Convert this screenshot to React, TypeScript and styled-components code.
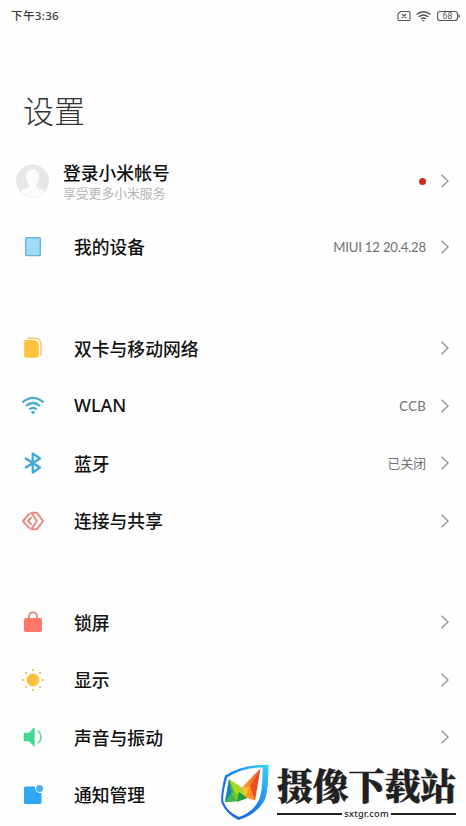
import React from 'react';
import styled, { createGlobalStyle } from 'styled-components';

const GlobalStyle = createGlobalStyle`
  * { box-sizing: border-box; }
  html, body { margin: 0; background: #fefefe; }
  body { overflow: hidden; font-family: "Noto Sans CJK SC", sans-serif; }
  svg { display: block; }
`;

const Screen = styled.main`
  position: relative;
  width: 466px;
  height: 826px;
  overflow: hidden;
  background: #fefefe;
  color: #111;
`;

const StatusBar = styled.header`
  height: 32px;
  padding: 0 4px 0 11px;
  display: flex;
  align-items: center;
  justify-content: space-between;
`;

const Time = styled.span`
  font-family: "Noto Sans", "Noto Sans CJK SC", sans-serif;
  font-size: 11.6px;
  line-height: 32px;
  font-weight: 500;
  letter-spacing: 0.3px;
  color: #3c3c3c;
`;

const Title = styled.h1`
  margin: 56px 0 0 23px;
  height: 44px;
  font-size: 31px;
  line-height: 43px;
  font-weight: 300;
  color: #333;
`;

const Account = styled.section`
  margin-top: 19px;
  height: 60px;
  padding: 0 16px 0 15px;
  display: flex;
  align-items: center;
`;

const AccountText = styled.div`
  flex: 1;
  margin-left: 14px;
`;

const AccountName = styled.div`
  font-size: 17.8px;
  line-height: 22px;
  font-weight: 500;
`;

const AccountHint = styled.div`
  font-size: 12.8px;
  line-height: 19px;
  color: #b5b5b5;
`;

const Dot = styled.i`
  width: 7px;
  height: 7px;
  margin-right: 14px;
  border-radius: 50%;
  background: #ca2d20;
`;

const Group = styled.section<{ $top: number }>`
  margin-top: ${(p) => p.$top}px;
`;

const Row = styled.div`
  height: 57.5px;
  padding: 0 16px 0 21px;
  display: flex;
  align-items: center;
`;

const IconSlot = styled.span`
  width: 24px;
  margin-right: 29px;
`;

const Label = styled.span<{ $latin: boolean }>`
  flex: 1;
  font-family: ${(p) => (p.$latin ? '"Noto Sans", sans-serif' : '"Noto Sans CJK SC", sans-serif')};
  font-size: ${(p) => (p.$latin ? 18 : 17.8)}px;
  line-height: 25px;
  font-weight: 500;
`;

const Value = styled.span<{ $latin?: boolean; $spacing: number }>`
  margin-right: 14px;
  font-family: ${(p) => (p.$latin ? 'Lato, sans-serif' : '"Noto Sans CJK SC", sans-serif')};
  font-size: ${(p) => (p.$latin ? 13.2 : 12.8)}px;
  line-height: 20px;
  letter-spacing: ${(p) => p.$spacing}px;
  color: #707070;
`;

const Divider = styled.hr`
  height: 1px;
  margin: 22px 16px 0 21px;
  border: 0;
  background: #f9f9f9;
`;

const Watermark = styled.aside`
  position: absolute;
  left: 219px;
  top: 762px;
  width: 240px;
  height: 62px;
  display: flex;
`;

const WatermarkText = styled.div`
  width: 179px;
  margin-left: 7px;
`;

const WatermarkName = styled.div`
  height: 46px;
  font-family: "Noto Serif CJK SC", "Noto Sans CJK SC", serif;
  font-size: 35.8px;
  line-height: 45px;
  font-weight: 900;
  color: #202020;
  -webkit-text-stroke: 0.5px #202020;
  white-space: nowrap;
`;

const SiteLine = styled.div`
  display: flex;
  align-items: center;
  gap: 2px;
  height: 12px;
  color: #222;
  font: 500 9.2px/12px "Noto Sans", sans-serif;
  letter-spacing: 0.25px;
  &::before, &::after {
    content: "";
    flex: 1;
    height: 2px;
    background: #222;
  }
`;

const StatusIcons = () => (
  <svg width="66" height="16" viewBox="0 0 66 16" fill="none" stroke="#555" strokeWidth="1.1">
    <path d="M4.5 3.500H13q1 0 1 1v7q0 1-1 1H3q-1 0-1-1V6zM6.200 6l4 4m0-4-4 4" />
    <path d="M20.500 6.500q7-5.500 14 0M22.700 8.800q4.800-3.700 9.600 0M25 11q2.500-1.800 5 0" strokeWidth="1.500" />
    <path d="m26 12 1.500 1.600 1.500-1.600z" fill="#555" stroke="none" />
    <rect x="41.500" y="3.500" width="20" height="9" rx="2.600" />
    <path d="M63.200 6.500v3" strokeWidth="1.400" />
    <text x="51.500" y="11.200" textAnchor="middle" fill="#555" stroke="none" fontFamily="Roboto, sans-serif" fontSize="8.800">68</text>
  </svg>
);

const Avatar = () => (
  <svg width="34" height="34" viewBox="0 0 34 34">
    <defs><clipPath id="avatar"><circle cx="17.500" cy="17" r="15.800" /></clipPath></defs>
    <circle cx="17.500" cy="17" r="16.200" fill="#e7e7e7" stroke="#e1e1e1" strokeWidth=".5" />
    <g clipPath="url(#avatar)" fill="#fbfbfb">
      <ellipse cx="17.500" cy="13" rx="6.700" ry="8" />
      <path d="M14 18h7v4.500q1 2 5 2.800 3 .7 4 3L27.500 34h-20L5 28.300q1-2.300 4-3 4-.8 5-2.800z" />
    </g>
  </svg>
);

const Chevron = () => (
  <svg width="10" height="16" viewBox="0 0 10 16" fill="none" stroke="#929292" strokeWidth="1.350">
    <path d="m1.500 1.800 6.500 6.200-6.500 6.200" />
  </svg>
);

const icons: Record<string, React.ReactNode> = {
  device: <rect x="4.700" y="2.700" width="14.600" height="18" rx="1" fill="#9edcf8" stroke="#5db4df" strokeWidth="1.300" />,
  sim: (
    <>
      <path d="M6.500 2.200h7.500q6 .5 6 6.200v11" fill="none" stroke="#efc877" strokeWidth="1.500" />
      <path d="M5 3.900h8q4.800 1 4.800 6V20q0 1.800-1.800 1.800H5Q3.200 21.800 3.200 20V5.700Q3.200 3.900 5 3.900z" fill="#fcc33b" />
    </>
  ),
  wlan: (
    <g fill="none" stroke="#44a9d5" strokeWidth="2.200">
      <path d="M1.500 8.400q10.500-9 21 0M4.900 12q7.100-6 14.200 0M8.300 15.400q3.700-3 7.400 0" />
      <path d="m9.700 17.700 2.300 2.700 2.300-2.700q-2.300-1.600-4.600 0z" fill="#3baee2" stroke="none" />
    </g>
  ),
  bluetooth: <path d="m4 7 15 9.500-7.300 5V2.500l7.300 5L4 17" fill="none" stroke="#3ba7da" strokeWidth="2.200" strokeLinejoin="round" />,
  share: (
    <g fill="none" stroke="#e48b80" strokeWidth="2" strokeLinejoin="round">
      <path d="M8.800 4.300 2 12l6.800 7.700M10.500 8.200 7 12l3.500 3.800" />
      <path d="M10.300 3.800H16l6 8.200-6 8.200h-5.700l5.500-8.200z" />
    </g>
  ),
  lock: (
    <>
      <path d="M8 9V6.300a4 4 0 0 1 8 0V9" fill="none" stroke="#d88a7d" strokeWidth="1.800" />
      <rect x="3" y="8" width="18" height="14" rx="1.800" fill="#ff7768" />
    </>
  ),
  display: (
    <g fill="#fbc13e">
      <circle cx="12" cy="12" r="6.500" />
      {[0, 45, 90, 135, 180, 225, 270, 315].map((angle) => (
        <circle key={angle} cx="12" cy="2" r="1.100" fill="#e8b755" transform={`rotate(${angle} 12 12)`} />
      ))}
    </g>
  ),
  sound: (
    <>
      <path d="M3.500 7.700H8l4.700-5Q13.700 2 13.700 3.300v17.400q0 1.300-1 .6l-4.700-5H3.500q-.8 0-.8-.8v-7q0-.8.800-.8z" fill="#3fd990" />
      <path d="M16.800 5.500q6.500 6.500 0 13" fill="none" stroke="#7ad4a7" strokeWidth="1.700" />
    </>
  ),
  notice: (
    <>
      <path d="M4.500 3.500h9.700a5 5 0 0 0 6.300 6.200v9.800q0 1.500-1.500 1.500H4.500Q3 21 3 19.500V5Q3 3.500 4.500 3.500z" fill="#2fa7f6" />
      <circle cx="18.600" cy="5.500" r="3.500" fill="#4ab0ea" />
    </>
  ),
};

type Item = { icon: string; label: string; value?: string; latin?: boolean; spacing?: number; plain?: boolean };

const SettingRow = ({ icon, label, value, latin, spacing = 0, plain }: Item) => (
  <Row>
    <IconSlot><svg width="24" height="24" viewBox="0 0 24 24">{icons[icon]}</svg></IconSlot>
    <Label $latin={label === 'WLAN'}>{label}</Label>
    {value && <Value $latin={latin} $spacing={spacing}>{value}</Value>}
    {!plain && <Chevron />}
  </Row>
);

const network: Item[] = [
  { icon: 'sim', label: '双卡与移动网络' },
  { icon: 'wlan', label: 'WLAN', value: 'CCB', latin: true, spacing: 0.25 },
  { icon: 'bluetooth', label: '蓝牙', value: '已关闭' },
  { icon: 'share', label: '连接与共享' },
];

const system: Item[] = [
  { icon: 'lock', label: '锁屏' },
  { icon: 'display', label: '显示' },
  { icon: 'sound', label: '声音与振动' },
  { icon: 'notice', label: '通知管理', plain: true },
];

const ShieldLogo = () => (
  <svg width="51" height="60" viewBox="0 0 51 60">
    <defs>
      <linearGradient id="shield" x1="0" y1="1" x2="1" y2="0">
        <stop offset="0" stopColor="#2459ee" /><stop offset=".5" stopColor="#187ef2" /><stop offset="1" stopColor="#3cd5f7" />
      </linearGradient>
      <linearGradient id="orange" x1="0" y1="1" x2="1" y2="0"><stop stopColor="#ffb52c" /><stop offset="1" stopColor="#ef4925" /></linearGradient>
    </defs>
    <path fillRule="evenodd" d="M49.500 2.700Q24 2 6 13.500 1 33 2.500 41 7 51.500 19.300 58 37 53 45.500 38.500 49.500 30 49.500 2.700zM43.500 5.500Q24 5 8.300 15.300 3 33 4.500 40 8.500 50 20 55 34 50 40 38 44 28 43.500 5.500z" fill="url(#shield)" />
    <path d="M10 17 25 35 17 39.500 6 40.300z" fill="#43b64b" />
    <path d="m10 17 14.300 9.500L28 36l-9 3z" fill="#a5d927" />
    <path d="m10 17 2.500 13.500L6 40.300z" fill="#1785bb" />
    <path d="m12 30.500 8 1L18 40z" fill="#70cb35" />
    <path d="m18 40 2-10 8.500 6z" fill="#229b43" />
    <path d="M41.500 6.500 22.500 26l4 7z" fill="url(#orange)" />
    <path d="m22.500 26 9-1.500L28 36.500z" fill="#ffc437" />
    <path d="M41.500 6.500 30.500 25 27 35l9 3.500z" fill="#e94b24" />
    <path d="m31 24 5 14.500-10-3.500z" fill="#ff961f" />
  </svg>
);

export default function App() {
  return (
    <>
      <GlobalStyle />
      <Screen>
        <StatusBar><Time>下午3:36</Time><StatusIcons /></StatusBar>
        <Title>设置</Title>
        <Account>
          <Avatar />
          <AccountText>
            <AccountName>登录小米帐号</AccountName>
            <AccountHint>享受更多小米服务</AccountHint>
          </AccountText>
          <Dot />
          <Chevron />
        </Account>
        <Group $top={7}><SettingRow icon="device" label="我的设备" value="MIUI 12 20.4.28" latin spacing={-0.2} /></Group>
        <Divider />
        <Group $top={21}>{network.map((item) => <SettingRow key={item.icon} {...item} />)}</Group>
        <Divider />
        <Group $top={21}>{system.map((item) => <SettingRow key={item.icon} {...item} />)}</Group>
        <Watermark>
          <ShieldLogo />
          <WatermarkText>
            <WatermarkName>摄像下载站</WatermarkName>
            <SiteLine>sxtgr.com</SiteLine>
          </WatermarkText>
        </Watermark>
      </Screen>
    </>
  );
}
